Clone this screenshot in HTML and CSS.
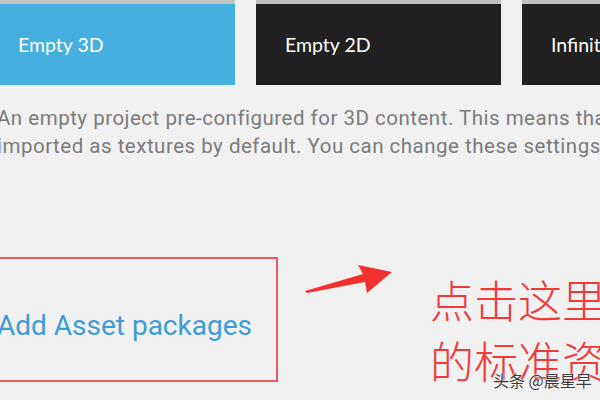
FILE: index.html
```html
<!DOCTYPE html>
<html lang="zh-CN">
<head>
    <meta charset="UTF-8">
    <meta name="viewport" content="width=device-width, initial-scale=1.0">
    <title>New Project</title>
    <link rel="stylesheet" href="styles.css">
</head>
<body>
    <div class="tiles">
        <div class="tile blue">Empty 3D</div>
        <div class="tile dark">Empty 2D</div>
        <div class="tile dark">Infinite Runner</div>
    </div>

    <p class="desc">An empty project pre-configured for 3D content. This means that images are<br>imported as textures by default. You can change these settings later.</p>

    <div class="lower">
        <div class="addbox">Add Asset packages</div>
        <svg class="arrow" width="95" height="40" viewBox="0 0 95 40">
            <polygon points="5,31 63,14 58,5 92,12 67,33 65,22 7,33" fill="#f2302e"/>
        </svg>
        <div class="note">点击这里添加<br>的标准资源包</div>
    </div>

    <span class="mark">头条 @晨星早</span>
</body>
</html>
```

FILE: styles.css
```css
*{
    padding: 0px;
    margin: 0px;
    box-sizing: border-box;
}
body{
    width: 600px;
    height: 400px;
    overflow: hidden;
    background-color: #f1f1f1;
    position: relative;
}
.tiles{
    display: flex;
    gap: 21px;
    margin-left: -10px;
    height: 85px;
}
.tile{
    flex: 0 0 245px;
    border-top: 4px solid #c2c2c2;
    display: flex;
    align-items: center;
    padding-left: 28px;
    font-family: Lato, "Liberation Sans", sans-serif;
    font-size: 19.5px;
    color: white;
    white-space: nowrap;
    overflow: hidden;
}
.blue{
    background-color: #45b0df;
}
.dark{
    background-color: #212121;
    padding-left: 29px;
}
.desc{
    margin: 19px 0 0 -3px;
    font-family: Roboto, "Liberation Sans", sans-serif;
    font-size: 20.5px;
    letter-spacing: 0.5px;
    line-height: 28px;
    color: #7b7b7b;
    white-space: nowrap;
}
.lower{
    display: flex;
    align-items: flex-start;
    margin-top: 97px;
}
.addbox{
    flex: 0 0 290px;
    height: 125px;
    margin-left: -12px;
    border: 2px solid #ec5a60;
    display: flex;
    align-items: center;
    padding: 12px 0 0 7px;
    font-family: Roboto, "Liberation Sans", sans-serif;
    font-size: 28px;
    color: #3d9bd6;
    white-space: nowrap;
}
.arrow{
    flex: none;
    margin: 3px 0 0 22px;
}
.note{
    margin: 12px 0 0 35px;
    font-family: "Noto Sans CJK SC", sans-serif;
    font-weight: 300;
    font-size: 44px;
    line-height: 61px;
    color: #f03a3a;
    white-space: nowrap;
}
.mark{
    position: absolute;
    left: 493px;
    top: 368px;
    font-family: "Noto Sans CJK SC", sans-serif;
    font-size: 16px;
    color: #3a3a3a;
    text-shadow: 0 0 2px white, 0 0 2px white;
}
```
